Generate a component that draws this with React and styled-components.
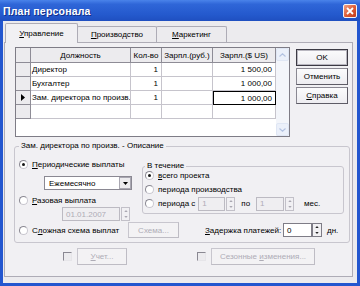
import React from 'react'
import styled, { createGlobalStyle } from 'styled-components'

const GlobalStyle = createGlobalStyle`
  html, body { margin: 0; padding: 0; }
  body {
    width: 360px;
    height: 286px;
    overflow: hidden;
    font-family: "Liberation Sans", Arial, sans-serif;
    font-size: 8px;
    color: #000;
  }
`

const Window = styled.div`
  width: 360px;
  height: 286px;
  display: flex;
  flex-direction: column;
  background: #2356cf;
`

const TitleBar = styled.div`
  height: 21px;
  flex: none;
  display: flex;
  align-items: center;
  justify-content: space-between;
  padding: 0 3px 0 3px;
  background: linear-gradient(#4a83ea 0%, #2f66d8 20%, #2459cd 70%, #1f4fc0 100%);
`

const Title = styled.span`
  color: #fff;
  font-weight: bold;
  font-size: 10.5px;
  letter-spacing: 0.2px;
  text-shadow: 1px 1px 0 #12308a;
`

const CloseButton = styled.div`
  width: 14px;
  height: 14px;
  box-sizing: border-box;
  border: 1px solid #f4f4f8;
  border-radius: 2px;
  background: linear-gradient(135deg, #f2a285 0%, #dc5a34 55%, #c23d1b 100%);
  display: flex;
  align-items: center;
  justify-content: center;
`

const Body = styled.div`
  flex: 1;
  margin: 0 3px 3px;
  background: #ecebee;
  display: flex;
  flex-direction: column;
  padding: 2px 4px 6px 1px;
`

const TabStrip = styled.div`
  height: 19px;
  display: flex;
  align-items: flex-end;
  padding-left: 1px;
`

const Tab = styled.div`
  width: ${p => p.w}px;
  height: ${p => (p.active ? 20 : 16)}px;
  box-sizing: border-box;
  display: flex;
  align-items: center;
  justify-content: center;
  border: 1px solid #aeacb6;
  border-bottom: none;
  border-radius: 2px 2px 0 0;
  background: ${p => (p.active ? '#f1f0f3' : '#ecebee')};
  margin-bottom: ${p => (p.active ? -1 : 0)}px;
  margin-left: ${p => (p.first ? 0 : -1)}px;
  position: relative;
  z-index: ${p => (p.active ? 1 : 0)};
`

const U = styled.span`
  text-decoration: underline;
`

const TabPanel = styled.div`
  height: 235px;
  box-sizing: border-box;
  border: 1px solid #aeacb6;
  background: #f1f0f3;
  padding: 4px 3px 0 10px;
  display: flex;
  flex-direction: column;
`

const TopSection = styled.div`
  display: flex;
  gap: 6px;
`

const GridFrame = styled.div`
  width: 275px;
  height: 90px;
  box-sizing: border-box;
  border: 1px solid #7e7c86;
  background: #fff;
  display: flex;
`

const Table = styled.div`
  flex: 1;
  display: flex;
  flex-direction: column;
`

const Row = styled.div`
  display: grid;
  grid-template-columns: 15px 100px 31px 51px 63px;
  height: ${p => (p.head ? 15 : 14)}px;
`

const HeadCell = styled.div`
  box-sizing: border-box;
  background: #ecebee;
  border-right: 1px solid #8e8c96;
  border-bottom: 1px solid #8e8c96;
  display: flex;
  align-items: center;
  justify-content: center;
  white-space: nowrap;
  overflow: hidden;
`

const Indicator = styled(HeadCell)``

const Cell = styled.div`
  box-sizing: border-box;
  border-right: 1px solid #c6c4cc;
  border-bottom: 1px solid #c6c4cc;
  display: flex;
  align-items: center;
  justify-content: ${p => (p.right ? 'flex-end' : 'flex-start')};
  padding: 0 ${p => (p.right ? 3 : 1)}px 0 1px;
  white-space: nowrap;
  overflow: hidden;
  ${p => p.focused && 'border: 1px solid #000;'}
`

const Scrollbar = styled.div`
  width: 13px;
  background: #f3f5fa;
  display: flex;
  flex-direction: column;
  justify-content: space-between;
`

const ScrollArrow = styled.div`
  height: 13px;
  box-sizing: border-box;
  border: 1px solid #dfe6f4;
  border-radius: 2px;
  background: #ebf0fa;
  display: flex;
  align-items: center;
  justify-content: center;
`

const ButtonColumn = styled.div`
  width: 52px;
  margin-top: 2px;
  display: flex;
  flex-direction: column;
  gap: 2px;
`

const Button = styled.div`
  width: ${p => (p.w ? `${p.w}px` : 'auto')};
  height: ${p => p.h || 17}px;
  box-sizing: border-box;
  display: flex;
  align-items: center;
  justify-content: center;
  border: 1px solid ${p => (p.disabled ? '#c8c6ce' : '#8a8892')};
  border-right-color: ${p => (p.disabled ? '#bebcc4' : '#5e5c66')};
  border-bottom-color: ${p => (p.disabled ? '#bebcc4' : '#5e5c66')};
  ${p => p.primary && 'border-color: #3c3a44; box-shadow: inset 0 0 0 1px #b9b7c0;'}
  background: ${p => (p.disabled ? '#f3f2f4' : 'linear-gradient(#fbfbfc, #eeedf1)')};
  color: ${p => (p.disabled ? '#aeacb6' : '#000')};
  white-space: nowrap;
  flex: none;
`

const GroupBox = styled.fieldset`
  margin: 4px -1px 0 -1px;
  padding: 0 4px 4px 4px;
  border: 1px solid #c8c6ce;
  border-radius: 3px;
  min-width: 0;
`

const Legend = styled.legend`
  padding: 0 2px;
  line-height: 10px;
  font-size: 8px;
`

const TopRow = styled.div`
  display: flex;
  align-items: flex-start;
`

const LeftCol = styled.div`
  width: 123px;
  padding-top: 8px;
  display: flex;
  flex-direction: column;
  flex: none;
`

const RadioRow = styled.div`
  display: flex;
  align-items: center;
  gap: 4px;
  height: ${p => p.h || 10}px;
  width: ${p => (p.w ? `${p.w}px` : 'auto')};
  margin-top: ${p => p.mt || 0}px;
  white-space: nowrap;
  flex: none;
`

const Radio = styled.span`
  width: 9px;
  height: 9px;
  box-sizing: border-box;
  border-radius: 50%;
  border: 1px solid #8a8892;
  border-bottom-color: #c9c7cf;
  border-right-color: #c9c7cf;
  background: #fff;
  flex: none;
  display: flex;
  align-items: center;
  justify-content: center;
  &::after {
    content: '';
    width: 3px;
    height: 3px;
    border-radius: 50%;
    background: ${p => (p.checked ? '#161616' : 'transparent')};
  }
`

const Select = styled.div`
  width: 88px;
  height: 14px;
  margin: 7px 0 0 25px;
  box-sizing: border-box;
  border: 1px solid #8a8892;
  background: #fff;
  display: flex;
  align-items: center;
  padding-left: 4px;
  justify-content: space-between;
`

const DropButton = styled.div`
  width: 12px;
  height: 12px;
  box-sizing: border-box;
  border: 1px solid #a9a7b1;
  background: #ecebee;
  display: flex;
  align-items: center;
  justify-content: center;
`

const FieldRow = styled.div`
  display: flex;
  align-items: center;
  margin: ${p => p.mt || 0}px 0 0 ${p => p.ml || 0}px;
  flex: none;
`

const Input = styled.div`
  width: ${p => p.w}px;
  height: 14px;
  box-sizing: border-box;
  border: 1px solid ${p => (p.disabled ? '#bcbac2' : '#7e7c86')};
  background: ${p => (p.disabled ? '#efeef1' : '#fff')};
  color: ${p => (p.disabled ? '#aeacb6' : '#000')};
  display: flex;
  align-items: center;
  padding-left: 3px;
  margin-left: ${p => p.ml || 0}px;
  flex: none;
`

const Spin = styled.div`
  width: ${p => p.w || 9}px;
  height: 14px;
  box-sizing: border-box;
  border: 1px solid ${p => (p.disabled ? '#c2c0c8' : '#7e7c86')};
  background: #f1f0f3;
  display: flex;
  flex-direction: column;
  justify-content: space-around;
  align-items: center;
  margin-left: ${p => p.ml || 0}px;
  flex: none;
`

const InnerGroup = styled.fieldset`
  margin: 10px 0 0 0;
  width: 202px;
  box-sizing: border-box;
  padding: 0 4px 2px 2px;
  border: 1px solid #c8c6ce;
  border-radius: 3px;
  min-width: 0;
`

const Text = styled.span`
  margin-left: ${p => p.ml || 0}px;
  white-space: nowrap;
  width: ${p => (p.w ? `${p.w}px` : 'auto')};
  flex: none;
`

const BottomRow = styled.div`
  height: 16px;
  margin-top: 1px;
  display: flex;
  align-items: center;
`

const CheckRow = styled.div`
  height: 17px;
  margin-top: 5px;
  display: flex;
  align-items: center;
`

const CheckBox = styled.span`
  width: 9px;
  height: 9px;
  box-sizing: border-box;
  border: 1px solid #e6e5e9;
  border-top-color: #8a8892;
  border-left-color: #8a8892;
  background: #ecebee;
  margin: 0 5px 0 ${p => p.ml}px;
  flex: none;
`

const Tri = ({ dir = 'down', color = '#000', w = 5, h = 3 }) => (
  <svg width={w} height={h} viewBox="0 0 5 3">
    <path d={dir === 'down' ? 'M0 0h5L2.5 3z' : 'M0 3h5L2.5 0z'} fill={color} />
  </svg>
)

const Chevron = ({ up }) => (
  <svg width="7" height="4" viewBox="0 0 7 4">
    <path d={up ? 'M0.5 3.5L3.5 0.8L6.5 3.5' : 'M0.5 0.5L3.5 3.2L6.5 0.5'} stroke="#b4c3e2" strokeWidth="1.2" fill="none" />
  </svg>
)

const SpinBox = ({ disabled, w, ml }) => (
  <Spin disabled={disabled} w={w} ml={ml}>
    <Tri dir="up" color={disabled ? '#a9a7b1' : '#222'} w={4} h={2} />
    <Tri dir="down" color={disabled ? '#a9a7b1' : '#222'} w={4} h={2} />
  </Spin>
)

const rows = [
  { name: 'Директор', qty: '1', usd: '1 500,00' },
  { name: 'Бухгалтер', qty: '1', usd: '1 000,00' },
  { name: 'Зам. директора по произв.', qty: '1', usd: '1 000,00', current: true },
]

export default function App() {
  return (
    <>
      <GlobalStyle />
      <Window>
        <TitleBar>
          <Title>План персонала</Title>
          <CloseButton>
            <svg width="8" height="8" viewBox="0 0 8 8">
              <path d="M1 1L7 7M7 1L1 7" stroke="#fff" strokeWidth="1.8" />
            </svg>
          </CloseButton>
        </TitleBar>
        <Body>
          <TabStrip>
            <Tab active first w={73}><span><U>У</U>правление</span></Tab>
            <Tab w={80}><span><U>П</U>роизводство</span></Tab>
            <Tab w={71}><span><U>М</U>аркетинг</span></Tab>
          </TabStrip>
          <TabPanel>
            <TopSection>
              <GridFrame>
                <Table>
                  <Row head>
                    <HeadCell />
                    <HeadCell>Должность</HeadCell>
                    <HeadCell>Кол-во</HeadCell>
                    <HeadCell>Зарпл.(руб.)</HeadCell>
                    <HeadCell>Зарпл.($ US)</HeadCell>
                  </Row>
                  {rows.map(r => (
                    <Row key={r.name}>
                      <Indicator>
                        {r.current && (
                          <svg width="4" height="7" viewBox="0 0 4 7">
                            <path d="M0 0L4 3.5L0 7z" fill="#000" />
                          </svg>
                        )}
                      </Indicator>
                      <Cell>{r.name}</Cell>
                      <Cell right>{r.qty}</Cell>
                      <Cell right />
                      <Cell right focused={r.current}>{r.usd}</Cell>
                    </Row>
                  ))}
                  <Row>
                    <Indicator />
                    <Cell />
                    <Cell />
                    <Cell />
                    <Cell />
                  </Row>
                </Table>
                <Scrollbar>
                  <ScrollArrow><Chevron up /></ScrollArrow>
                  <ScrollArrow><Chevron /></ScrollArrow>
                </Scrollbar>
              </GridFrame>
              <ButtonColumn>
                <Button primary>OK</Button>
                <Button>Отменить</Button>
                <Button><span><U>С</U>правка</span></Button>
              </ButtonColumn>
            </TopSection>

            <GroupBox>
              <Legend>Зам. директора по произв. - Описание</Legend>
              <TopRow>
                <LeftCol>
                  <RadioRow>
                    <Radio checked />
                    <span><U>П</U>ериодические выплаты</span>
                  </RadioRow>
                  <Select>
                    <span>Ежемесячно</span>
                    <DropButton><Tri /></DropButton>
                  </Select>
                  <RadioRow mt={5}>
                    <Radio />
                    <span><U>Р</U>азовая выплата</span>
                  </RadioRow>
                  <FieldRow mt={2} ml={43}>
                    <Input disabled w={58}>01.01.2007</Input>
                    <SpinBox disabled ml={1} />
                  </FieldRow>
                </LeftCol>
                <InnerGroup>
                  <Legend>В течение</Legend>
                  <RadioRow h={9}>
                    <Radio checked />
                    <span><U>в</U>сего проекта</span>
                  </RadioRow>
                  <RadioRow h={9} mt={5}>
                    <Radio />
                    <span>периода производства</span>
                  </RadioRow>
                  <RadioRow h={15} mt={2}>
                    <Radio />
                    <span>периода с</span>
                    <Input disabled w={27} ml={-1}>1</Input>
                    <SpinBox disabled ml={-3} />
                    <Text ml={2}>по</Text>
                    <Input disabled w={28} ml={2}>1</Input>
                    <SpinBox disabled ml={-3} />
                    <Text ml={6}>мес.</Text>
                  </RadioRow>
                </InnerGroup>
              </TopRow>
              <BottomRow>
                <RadioRow w={109}>
                  <Radio />
                  <span>С<U>л</U>ожная схема выплат</span>
                </RadioRow>
                <Button disabled w={51} h={16}>Схема...</Button>
                <Text ml={26} w={78}><U>З</U>адержка платежей:</Text>
                <Input w={29}>0</Input>
                <SpinBox w={10} />
                <Text ml={5}>дн.</Text>
              </BottomRow>
            </GroupBox>

            <CheckRow>
              <CheckBox ml={48} />
              <Button disabled w={50}><span><U>У</U>чет...</span></Button>
              <CheckBox ml={70} />
              <Button disabled w={104}><span>Сезонные <U>и</U>зменения...</span></Button>
            </CheckRow>
          </TabPanel>
        </Body>
      </Window>
    </>
  )
}
